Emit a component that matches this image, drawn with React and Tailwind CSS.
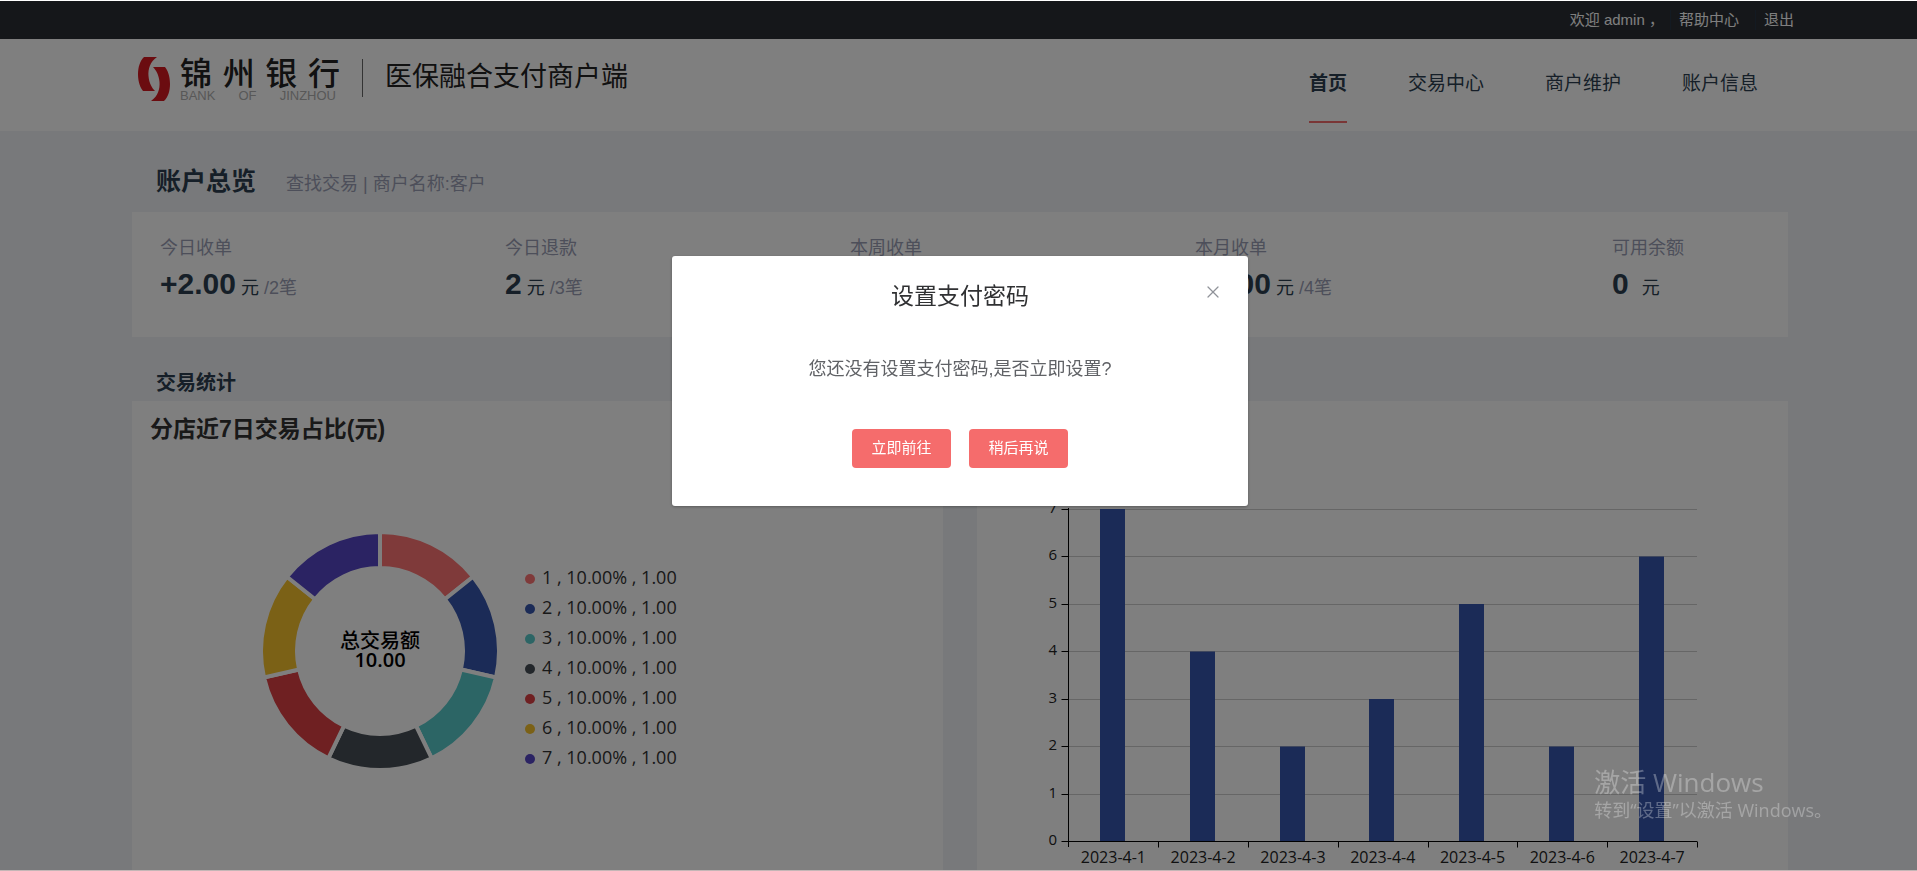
import React, { useState } from "react";
import { X } from "lucide-react";

const NAV = ["首页", "交易中心", "商户维护", "账户信息"];

const STATS = [
  { label: "今日收单", value: "+2.00", count: "/2笔" },
  { label: "今日退款", value: "2", count: "/3笔" },
  { label: "本周收单", value: "+2.00", count: "/4笔" },
  { label: "本月收单", value: "+2.00", count: "/4笔" },
];

const SHOPS = [
  { name: "1", color: "#ff7574" },
  { name: "2", color: "#3656ae" },
  { name: "3", color: "#58cacb" },
  { name: "4", color: "#464e56" },
  { name: "5", color: "#de4044" },
  { name: "6", color: "#f6c22c" },
  { name: "7", color: "#5646c6" },
];

const DAYS = [
  { date: "2023-4-1", value: 7 },
  { date: "2023-4-2", value: 4 },
  { date: "2023-4-3", value: 2 },
  { date: "2023-4-4", value: 3 },
  { date: "2023-4-5", value: 5 },
  { date: "2023-4-6", value: 2 },
  { date: "2023-4-7", value: 6 },
];

function sectorPath(i, total, cx, cy, R, r) {
  const a0 = (i / total) * Math.PI * 2 - Math.PI / 2;
  const a1 = ((i + 1) / total) * Math.PI * 2 - Math.PI / 2;
  const p = (rad, a) => `${cx + rad * Math.cos(a)} ${cy + rad * Math.sin(a)}`;
  return `M${p(R, a0)} A${R} ${R} 0 0 1 ${p(R, a1)} L${p(r, a1)} A${r} ${r} 0 0 0 ${p(r, a0)} Z`;
}

function DonutChart() {
  return (
    <svg viewBox="0 0 811 420" className="block w-full font-['Open_Sans','Noto_Sans_CJK_SC',sans-serif]">
      {SHOPS.map((s, i) => (
        <path
          key={s.name}
          d={sectorPath(i, SHOPS.length, 248, 191, 119, 83)}
          fill={s.color}
          stroke="#fff"
          strokeWidth="4"
        />
      ))}
      <text x="248" y="188" textAnchor="middle" className="text-[20px] font-medium">总交易额</text>
      <text x="248" y="207" textAnchor="middle" className="text-[20px] font-semibold">10.00</text>
      {SHOPS.map((s, i) => (
        <g key={s.name}>
          <circle cx="398" cy={119 + i * 30} r="5" fill={s.color} />
          <text x="410" y={124 + i * 30} fill="#333" className="text-[18px]">
            {s.name} , 10.00% , 1.00
          </text>
        </g>
      ))}
    </svg>
  );
}

function BarChart() {
  const left = 91.5;
  const right = 720;
  const bottom = 381.5;
  const unit = 47.5;
  const step = (right - left) / DAYS.length;
  const ticks = [0, 1, 2, 3, 4, 5, 6, 7];

  return (
    <svg viewBox="0 0 811 420" className="block w-full font-['Open_Sans',sans-serif]">
      {ticks.map((t) => {
        const y = Math.floor(bottom - t * unit) + 0.5;
        return (
          <g key={t}>
            {t > 0 && <line x1={left} x2={right} y1={y} y2={y} stroke="#ccc" />}
            <line x1={left - 7} x2={left} y1={y} y2={y} stroke="#000" />
            <text x="80" y={y + 3} textAnchor="end" fill="#222" className="text-[15px]">{t}</text>
          </g>
        );
      })}
      {DAYS.map((d, i) => (
        <rect
          key={d.date}
          x={Math.round(left + step * i + 31.5)}
          y={bottom - d.value * unit}
          width="25"
          height={d.value * unit}
          fill="#3656ae"
        />
      ))}
      <line x1={left} x2={left} y1="48" y2="387" stroke="#000" />
      <line x1={left} x2={right} y1={bottom} y2={bottom} stroke="#000" />
      {DAYS.map((d, i) => {
        const x = Math.round(left + step * (i + 1)) + 0.5;
        return (
          <g key={d.date}>
            <line x1={x} x2={x} y1={bottom} y2={bottom + 6} stroke="#000" />
            <text x={left + step * (i + 0.5)} y="403" textAnchor="middle" fill="#222" className="text-[16px]">
              {d.date}
            </text>
          </g>
        );
      })}
    </svg>
  );
}

function Logo() {
  return (
    <div className="flex items-start pt-[18px]">
      <svg viewBox="0 0 32 44" className="w-8 h-11 mr-[10px]" aria-hidden="true">
        <path d="M6 0H19C12 5 10 12 10.500 19C11 26 14 31 17 34H5C1 29 0 22 0 17C0 10 2 4 6 0Z" fill="#d71920" />
        <path d="M26 44H13C20 39 22 32 21.500 25C21 18 18 13 15 10H27C31 15 32 22 32 27C32 34 30 40 26 44Z" fill="#d71920" />
      </svg>
      <div className="w-40 text-[#222]">
        <div className="flex justify-between text-[32px] leading-[34px] font-medium">
          <span>锦</span>
          <span>州</span>
          <span>银</span>
          <span>行</span>
        </div>
        <div className="flex justify-between pr-1 text-[13px] leading-[10px] text-[#b0b0b0]">
          <span>BANK</span>
          <span>OF</span>
          <span>JINZHOU</span>
        </div>
      </div>
      <div className="w-px h-[38px] mt-[2px] mx-[22px] bg-[#666]" />
      <h1 className="text-[27px] leading-[40px] text-[#222]">医保融合支付商户端</h1>
    </div>
  );
}

function PasswordDialog({ onClose }) {
  return (
    <div className="fixed inset-x-0 inset-y-px z-10 bg-black/50 flex justify-center items-start pt-[255px] pl-[3px]">
      <div
        role="dialog"
        aria-label="设置支付密码"
        className="relative w-[576px] rounded-[3px] bg-white pt-[25px] pb-[38px] text-center shadow-[0_1px_3px_rgba(0,0,0,0.3)]"
      >
        <h2 className="text-[23px] leading-[30px] text-[#303133]">设置支付密码</h2>
        <button
          type="button"
          aria-label="关闭"
          onClick={onClose}
          className="absolute top-[26px] right-[25px] text-[#909399]"
        >
          <X size={20} strokeWidth={1.500} />
        </button>
        <p className="pt-[45px] text-[18px] leading-[26px] text-[#606266]">您还没有设置支付密码,是否立即设置?</p>
        <div className="flex justify-center gap-[18px] pt-[47px]">
          <button type="button" className="w-[99px] h-[39px] rounded bg-[#f56c6c] text-[15px] text-white">
            立即前往
          </button>
          <button type="button" onClick={onClose} className="w-[99px] h-[39px] rounded bg-[#f56c6c] text-[15px] text-white">
            稍后再说
          </button>
        </div>
      </div>
    </div>
  );
}

export default function App() {
  const [open, setOpen] = useState(true);

  return (
    <div className="h-screen overflow-hidden border-t border-b border-t-white border-b-[#c4b6b6] bg-[#f0f3f6] text-[#2c3e50] font-['Liberation_Sans','Noto_Sans_CJK_SC',sans-serif]">
      {/* Top bar */}
      <div className="h-[38px] pr-[123px] flex items-center justify-end bg-[#2a2e34] text-[15px] leading-[20px] text-white">
        <span className="pr-[6px] border-r border-[#263445]">欢迎 admin ，</span>
        <a href="#help" className="pl-2 pr-4 border-r border-[#263445]">帮助中心</a>
        <a href="#logout" className="pl-2">退出</a>
      </div>

      {/* Header */}
      <header className="h-[92px] pl-[138px] pr-[159px] flex justify-between bg-white">
        <Logo />
        <nav className="flex gap-[61px] text-[19px]">
          {NAV.map((n, i) => (
            <a
              key={n}
              href={"#nav" + i}
              className={
                i === 0
                  ? "h-[84px] pt-[8px] flex items-center border-b-2 border-[#f56c6c] font-bold"
                  : "h-[84px] pt-[8px] flex items-center border-b-2 border-transparent"
              }
            >
              {n}
            </a>
          ))}
        </nav>
      </header>

      <main className="pl-[132px] pr-[129px]">
        <div className="h-[81px] pt-[32px] pl-[24px] flex items-baseline gap-[30px]">
          <h2 className="text-[25px] leading-[36px] font-bold">账户总览</h2>
          <p className="text-[18px] text-[#9a9eb5]">查找交易 | 商户名称:客户</p>
        </div>

        {/* Account summary */}
        <section className="h-[125px] pt-[23px] grid grid-cols-[5fr_5fr_5fr_5fr_4fr] bg-white">
          {STATS.map((s) => (
            <div key={s.label} className="pl-[28px]">
              <p className="text-[18px] leading-[26px] text-[#9a9eb5]">{s.label}</p>
              <p className="text-[18px] leading-[46px]">
                <b className="text-[30px]">{s.value}</b> 元 <span className="text-[#9a9eb5]">{s.count}</span>
              </p>
            </div>
          ))}
          <div className="pl-[100px]">
            <p className="text-[18px] leading-[26px] text-[#9a9eb5]">可用余额</p>
            <p className="text-[18px] leading-[46px]">
              <b className="mr-2 text-[30px]">0</b> 元
            </p>
          </div>
        </section>

        <h3 className="h-16 pt-[31px] pl-[24px] text-[20px] leading-[30px] font-bold">交易统计</h3>

        {/* Charts */}
        <div className="grid grid-cols-2 gap-[34px]">
          <section className="bg-white">
            <h4 className="h-[59px] pt-[11px] pl-[18px] text-[23px] leading-[34px] font-bold text-[#333]">
              分店近7日交易占比(元)
            </h4>
            <DonutChart />
          </section>
          <section className="bg-white">
            <h4 className="h-[59px] pt-[11px] pl-[18px] text-[23px] leading-[34px] font-bold text-[#333]">
              近7日交易笔数
            </h4>
            <BarChart />
          </section>
        </div>
      </main>

      {open && <PasswordDialog onClose={() => setOpen(false)} />}

      {/* System activation notice floating over the desktop */}
      <div className="fixed right-[85px] bottom-[49px] z-20 text-white/30 font-['Open_Sans','Noto_Sans_CJK_SC',sans-serif]">
        <p className="text-[26px] leading-[32px]">激活 Windows</p>
        <p className="text-[18px] leading-[24px]">转到“设置”以激活 Windows。</p>
      </div>
    </div>
  );
}
